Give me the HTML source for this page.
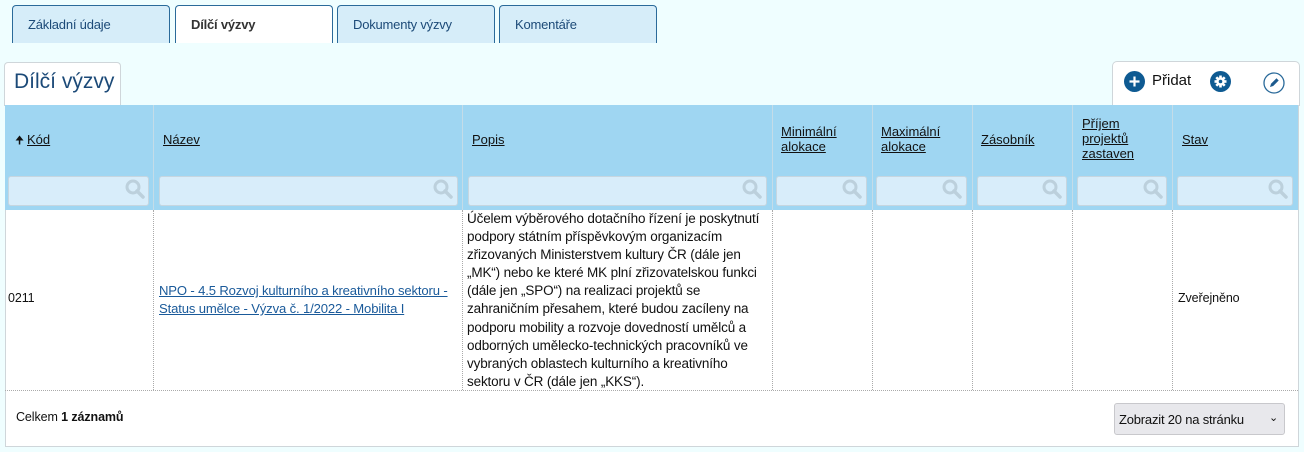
<!DOCTYPE html>
<html><head><meta charset="utf-8"><style>
*{box-sizing:border-box;margin:0;padding:0}
body{width:1304px;height:452px;background:#effeff;font-family:"Liberation Sans",Arial,sans-serif;color:#111;position:relative;overflow:hidden;font-size:13px}
.a{position:absolute}
.tab{position:absolute;top:5px;height:38px;background:#d6edf9;border:1px solid #2a6a9a;border-bottom:none;border-radius:4px 4px 0 0;font-size:13px;color:#1c4a78;padding:11px 0 0 15px;letter-spacing:-.2px}
.tab.act{background:#fff;color:#333;font-weight:bold}
.panel{position:absolute;left:5px;top:105px;width:1294px;height:342px;background:#fff;border:1px solid #cfd6da}
.hdr{position:absolute;left:5px;top:105px;width:1293px;height:105px;background:#9fd6f2}
.col{position:absolute;top:105px;height:105px;border-left:1px solid #c4dce8}
.ht{position:absolute;font-size:13px;text-decoration:underline;color:#111;line-height:15px}
.flt{position:absolute;top:176px;height:30px;background:#d8edfa;border:1px solid #c6d6e0;border-radius:3px}
.vd{position:absolute;top:210px;height:180px;border-left:1px dotted #aaa}
.body{font-size:12.5px;letter-spacing:-.1px}
.big{font-size:13.5px;letter-spacing:-.15px;white-space:nowrap}
</style></head><body>
<div class="tab" style="left:12px;width:158px">Základní údaje</div>
<div class="tab act" style="left:175px;width:158px">Dílčí výzvy</div>
<div class="tab" style="left:337px;width:158px">Dokumenty výzvy</div>
<div class="tab" style="left:499px;width:158px">Komentáře</div>

<div class="a" style="left:4px;top:62px;width:117px;height:44px;background:#fff;border:1px solid #cfd6da;border-bottom:none;border-radius:4px 4px 0 0;font-size:21px;color:#1c4a78;padding:7px 0 0 9px;white-space:nowrap">Dílčí výzvy</div>
<div class="a" style="left:1112px;top:61px;width:188px;height:45px;background:#fff;border:1px solid #cfd6da;border-bottom:none;border-radius:5px 5px 0 0"></div>
<svg class="a" style="left:1124px;top:71px" width="21" height="21"><circle cx="10.5" cy="10.5" r="10.5" fill="#0e5a92"/><path d="M10.5 5.5v10M5.5 10.5h10" stroke="#fff" stroke-width="2.2"/></svg>
<div class="a" style="left:1152px;top:72px;font-size:15px;color:#111">Přidat</div>
<svg class="a" style="left:1210px;top:71px" width="21" height="21"><circle cx="10.5" cy="10.5" r="10.5" fill="#0e5a92"/><g transform="translate(10.5 10.5)" fill="#fff"><circle r="4.2"/><g id="t"><rect x="-1.3" y="-6" width="2.6" height="12"/></g><use href="#t" transform="rotate(45)"/><use href="#t" transform="rotate(90)"/><use href="#t" transform="rotate(135)"/></g><circle cx="10.5" cy="10.5" r="1.8" fill="#0e5a92"/></svg>
<svg class="a" style="left:1263px;top:72px" width="22" height="22"><circle cx="11" cy="11" r="10" fill="#fff" stroke="#2a6a9a" stroke-width="1.3"/><path d="M7 15l1-3.2 5.5-5.5 2.2 2.2-5.5 5.5z" fill="#1c5a8e"/></svg>

<div class="panel"></div>
<div class="hdr"></div>
<div class="col" style="left:153px"></div><div class="col" style="left:462px"></div><div class="col" style="left:772px"></div><div class="col" style="left:872px"></div><div class="col" style="left:972px"></div><div class="col" style="left:1072px"></div><div class="col" style="left:1172px"></div>

<div class="a" style="left:15px;top:132px;font-size:11px">🠉</div>
<div class="ht" style="left:27px;top:132px">Kód</div>
<div class="ht" style="left:163px;top:132px">Název</div>
<div class="ht" style="left:472px;top:132px">Popis</div>
<div class="ht" style="left:781px;top:124px">Minimální<br>alokace</div>
<div class="ht" style="left:881px;top:124px">Maximální<br>alokace</div>
<div class="ht" style="left:981px;top:132px">Zásobník</div>
<div class="ht" style="left:1082px;top:116px">Příjem<br>projektů<br>zastaven</div>
<div class="ht" style="left:1182px;top:132px">Stav</div>

<div class="flt" style="left:8px;width:141px"></div>
<div class="flt" style="left:159px;width:299px"></div>
<div class="flt" style="left:468px;width:299px"></div>
<div class="flt" style="left:776px;width:91px"></div>
<div class="flt" style="left:876px;width:91px"></div>
<div class="flt" style="left:977px;width:90px"></div>
<div class="flt" style="left:1077px;width:90px"></div>
<div class="flt" style="left:1177px;width:116px"></div>
<svg width="0" height="0" style="position:absolute"><defs><g id="m"><circle cx="8" cy="8" r="6" fill="none" stroke="#bcd0dc" stroke-width="3"/><path d="M12 12l6 6" stroke="#bcd0dc" stroke-width="3.5" stroke-linecap="round"/></g></defs></svg>
<svg class="a" style="left:125px;top:179px" width="22" height="22"><use href="#m"/></svg>
<svg class="a" style="left:433px;top:179px" width="22" height="22"><use href="#m"/></svg>
<svg class="a" style="left:742px;top:179px" width="22" height="22"><use href="#m"/></svg>
<svg class="a" style="left:842px;top:179px" width="22" height="22"><use href="#m"/></svg>
<svg class="a" style="left:1042px;top:179px" width="22" height="22"><use href="#m"/></svg>
<svg class="a" style="left:942px;top:179px" width="22" height="22"><use href="#m"/></svg>
<svg class="a" style="left:1143px;top:179px" width="22" height="22"><use href="#m"/></svg>
<svg class="a" style="left:1268px;top:179px" width="22" height="22"><use href="#m"/></svg>

<div class="vd" style="left:153px"></div><div class="vd" style="left:462px"></div><div class="vd" style="left:772px"></div><div class="vd" style="left:872px"></div><div class="vd" style="left:972px"></div><div class="vd" style="left:1072px"></div><div class="vd" style="left:1172px"></div>
<div class="a" style="left:5px;top:390px;width:1293px;border-top:1px dotted #aaa"></div>

<div class="a body" style="left:8px;top:291px">0211</div>
<div class="a big" style="left:159px;top:282px;line-height:18px;color:#1a5a9a;text-decoration:underline;font-size:13.1px">NPO - 4.5 Rozvoj kulturního a kreativního sektoru -<br>Status umělce - Výzva č. 1/2022 - Mobilita I</div>
<div class="a big" style="left:467px;top:210px;line-height:18.1px">Účelem výběrového dotačního řízení je poskytnutí<br>podpory státním příspěvkovým organizacím<br>zřizovaných Ministerstvem kultury ČR (dále jen<br>„MK“) nebo ke které MK plní zřizovatelskou funkci<br>(dále jen „SPO“) na realizaci projektů se<br>zahraničním přesahem, které budou zacíleny na<br>podporu mobility a rozvoje dovedností umělců a<br>odborných umělecko-technických pracovníků ve<br>vybraných oblastech kulturního a kreativního<br>sektoru v ČR (dále jen „KKS“).</div>
<div class="a body" style="left:1178px;top:291px">Zveřejněno</div>

<div class="a body" style="left:16px;top:410px">Celkem <b>1 záznamů</b></div>
<div class="a" style="left:1114px;top:403px;width:171px;height:32px;background:#e8e8ec;border:1px solid #c8c8cc;border-radius:3px;font-size:13px;padding:8px 0 0 4px;letter-spacing:-.2px">Zobrazit 20 na stránku<span style="position:absolute;right:6px;top:7px;font-size:11px">⌄</span></div>
</body></html>
